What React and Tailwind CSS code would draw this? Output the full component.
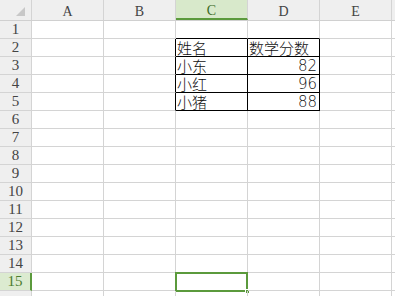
import React from 'react';

const cols = ['A', 'B', 'C', 'D', 'E', 'F'];
const rows = Array.from({ length: 16 }, (_, i) => i + 1);

const data = {
  2: ['姓名', '数学分数'],
  3: ['小东', '82'],
  4: ['小红', '96'],
  5: ['小猪', '88'],
};

const Cell = ({ r, c }) => {
  const inTable = r >= 2 && r <= 5;
  const tableTop = r === 1 && (c === 'C' || c === 'D');
  const leftOfTable = inTable && c === 'B';
  const isTableCell = inTable && (c === 'C' || c === 'D');
  const rightBlack = isTableCell || leftOfTable;
  const bottomBlack = isTableCell || tableTop;
  let text = null;
  if (isTableCell) text = data[r][c === 'C' ? 0 : 1];
  const numeric = c === 'D' && r > 2;
  const selected = r === 15 && c === 'C';

  return (
    <div
      className={`relative shrink-0 w-[72px] h-[18px] border-r border-b ${rightBlack ? 'border-r-black' : 'border-r-[#d4d4d4]'} ${bottomBlack ? 'border-b-black' : 'border-b-[#d4d4d4]'} flex items-center ${numeric ? 'justify-end pr-[2px]' : 'pl-[1px]'}`}
    >
      {text && (
        <span
          className={`leading-[16px] text-[#111] ${numeric ? "text-[15px] font-['DejaVu_Sans',sans-serif] font-light" : "text-[15px] font-['Noto_Sans_CJK_SC',sans-serif] font-light"}`}
        >
          {text}
        </span>
      )}
      {selected && (
        <div className="absolute -left-px -top-px w-[73px] h-[20px] border-2 border-[#5b9a3c]">
          <div className="absolute -right-[4px] -bottom-[4px] w-[5px] h-[5px] bg-[#5b9a3c] border border-white" />
        </div>
      )}
    </div>
  );
};

const App = () => {
  return (
    <div className="w-[395px] h-[296px] overflow-hidden bg-white font-['Liberation_Serif',serif]">
      <div className="flex h-[21px] bg-[#efefef] border-b border-[#d0d0d0]">
        <div className="shrink-0 w-[32px] h-full border-r border-[#d4d4d4] relative">
          <div className="absolute right-[6px] bottom-[4px] w-0 h-0 border-l-[9px] border-l-transparent border-b-[9px] border-b-[#c8c8c8]" />
        </div>
        {cols.map((c) => (
          <div
            key={c}
            className={`shrink-0 w-[72px] h-full border-r border-[#d4d4d4] flex items-center justify-center text-[14px] pt-[2px] ${c === 'C' ? 'bg-[#d8e9cb] border-b-2 border-b-[#5b9a3c] text-[#3c6b25]' : 'text-[#444]'}`}
          >
            {c === 'F' ? '' : c}
          </div>
        ))}
      </div>
      {rows.map((r) => (
        <div key={r} className="flex">
          <div
            className={`shrink-0 w-[32px] h-[18px] border-b border-[#d4d4d4] flex items-center justify-center text-[15px] ${r === 15 ? 'bg-[#dcebd0] text-[#4b7d2f] border-r-2 border-r-[#5b9a3c]' : 'bg-[#efefef] text-[#444] border-r border-r-[#d4d4d4]'}`}
          >
            {r < 16 ? r : ''}
          </div>
          {cols.map((c) => (
            <Cell key={c} r={r} c={c} />
          ))}
        </div>
      ))}
    </div>
  );
};

export default App;
